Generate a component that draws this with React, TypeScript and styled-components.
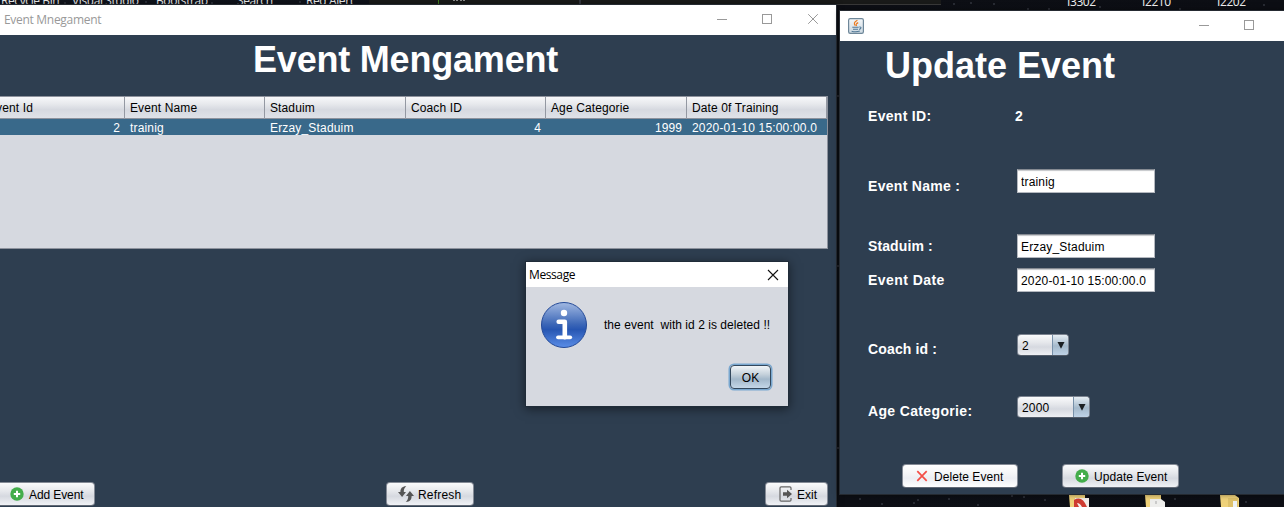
import React from "react";
import styled, { createGlobalStyle } from "styled-components";

const GlobalStyle = createGlobalStyle`
  * { box-sizing: border-box; }
  html, body { margin: 0; padding: 0; overflow: hidden; }
  body { font-family: "Liberation Sans", Arial, sans-serif; font-size: 12px; color: #000; }
`;

const Desktop = styled.main`
  position: relative;
  width: 1284px;
  height: 507px;
  overflow: hidden;
  background: linear-gradient(90deg, #10141d 0, #0d0f15 65%, #0c0e14 100%);
`;

const Stars = styled.svg`
  position: absolute;
  inset: 0;
`;

const BackWindow = styled.div`
  position: absolute;
  left: 369px;
  top: -10px;
  width: 572px;
  height: 15px;
  background: #191a19;
  border-bottom: 1px solid #383838;
`;

const ShortcutLabel = styled.span<{ $x: number; $y: number }>`
  position: absolute;
  left: ${(p) => p.$x}px;
  top: ${(p) => p.$y}px;
  font: 12px/16px "Open Sans", sans-serif;
  letter-spacing: -0.4px;
  color: #f0f0f0;
  white-space: pre;
`;

const FolderIcon = styled.svg<{ $x: number }>`
  position: absolute;
  left: ${(p) => p.$x}px;
  top: 495px;
`;

const Window = styled.section<{ $x: number; $y: number; $w: number; $h: number }>`
  position: absolute;
  left: ${(p) => p.$x}px;
  top: ${(p) => p.$y}px;
  width: ${(p) => p.$w}px;
  height: ${(p) => p.$h}px;
  display: flex;
  flex-direction: column;
  background: #2e3e50;
  box-shadow: 0 0 0 1px #252a31, 0 0 6px rgba(0, 0, 0, 0.6);
`;

const TitleBar = styled.header`
  display: flex;
  align-items: center;
  justify-content: space-between;
  flex: none;
  height: 30px;
  padding-left: 4px;
  background: #fff;
`;

const IconTitleBar = styled(TitleBar)`
  padding-left: 8px;
`;

const WindowTitle = styled.span<{ $color: string; $spacing: number }>`
  font: 12px/16px "Open Sans", sans-serif;
  letter-spacing: ${(p) => p.$spacing}px;
  color: ${(p) => p.$color};
`;

const WindowControls = styled.svg`
  flex: none;
`;

const Heading = styled.h1<{ $left: number; $spacing: number }>`
  flex: none;
  margin: 0;
  padding-left: ${(p) => p.$left}px;
  height: 61px;
  padding-top: 3px;
  font-size: 36px;
  line-height: 43px;
  font-weight: 700;
  letter-spacing: ${(p) => p.$spacing}px;
  color: #fff;
  white-space: nowrap;
`;

const TablePane = styled.div`
  flex: none;
  width: 828px;
  height: 153px;
  border: solid #8d929d;
  border-width: 1px 1px 1px 0;
  background: #d6d9e0;
  overflow: hidden;
`;

const TableRow = styled.div`
  display: grid;
  grid-template-columns: 125px 140px 141px 140px 141px 140px;
`;

const HeaderRow = styled(TableRow)`
  height: 22px;
  background: linear-gradient(#f7f8fa 0, #e6e8ec 35%, #d6d9e0 60%, #dfe2e8 100%);
  border-bottom: 1px solid #8d929d;
`;

const HeaderCell = styled.div<{ $shift?: number }>`
  padding-left: 5px;
  border-right: 1px solid #9398a2;
  line-height: 22px;
  letter-spacing: 0.12px;
  text-indent: ${(p) => p.$shift ?? 0}px;
  white-space: nowrap;
`;

const DataRow = styled(TableRow)`
  height: 16px;
  background: #39698a;
  color: #fff;
`;

const DataCell = styled.div<{ $numeric?: boolean }>`
  padding: 0 5px;
  line-height: 18px;
  letter-spacing: ${(p) => (p.$numeric ? 0.1 : 0.17)}px;
  white-space: nowrap;
  text-align: ${(p) => (p.$numeric ? "right" : "left")};
`;

const Tracked = styled.span<{ $by: number }>`
  letter-spacing: ${(p) => p.$by}px;
`;

const MainActions = styled.footer`
  display: flex;
  justify-content: space-between;
  align-items: flex-start;
  margin-top: 233px;
  margin-left: -5px;
  width: 833px;
`;

const PushButton = styled.button<{ $w: number; $pad?: number; $gap?: number; $hover?: boolean }>`
  display: flex;
  align-items: center;
  flex: none;
  gap: ${(p) => p.$gap ?? 4}px;
  width: ${(p) => p.$w}px;
  height: 24px;
  padding: 1px 0 0 ${(p) => p.$pad ?? 13}px;
  border: 1px solid #858b96;
  border-bottom-color: #626975;
  border-radius: 4px;
  background: ${(p) =>
    p.$hover
      ? "linear-gradient(#fff 0, #f4f5f7 40%, #eceef3 60%, #fff 100%)"
      : "linear-gradient(#fafbfc 0, #e5e7eb 38%, #d6d9e0 60%, #f0f2f6 100%)"};
  color: #000;
  font: 12px/16px "Liberation Sans", Arial, sans-serif;
  white-space: nowrap;
`;

const ButtonIcon = styled.svg`
  flex: none;
  margin-top: -1px;
`;

const UpdateForm = styled.form`
  display: flex;
  flex-direction: column;
  padding-left: 28px;
`;

const FormRow = styled.div<{ $h: number }>`
  display: grid;
  grid-template-columns: 149px auto;
  justify-content: start;
  align-items: start;
  height: ${(p) => p.$h}px;
`;

const FieldLabel = styled.label<{ $down?: number; $spacing?: number }>`
  padding-top: ${(p) => p.$down ?? 0}px;
  color: #fff;
  font-size: 14px;
  line-height: 18px;
  font-weight: 700;
  letter-spacing: ${(p) => p.$spacing ?? 0.3}px;
  white-space: nowrap;
`;

const IdValue = styled(FieldLabel)`
  margin-left: -2px;
`;

const TextField = styled.input`
  width: 138px;
  height: 24px;
  padding: 1px 3px 0;
  border: 1px solid #b4b8bf;
  border-top-color: #858a92;
  border-radius: 0;
  background: #fff;
  box-shadow: inset 0 2px 1px -1px #c5c7ca;
  font: 12px "Liberation Sans", Arial, sans-serif;
  letter-spacing: 0.17px;
  color: #000;
`;

const ComboBox = styled.div<{ $w: number }>`
  display: flex;
  width: ${(p) => p.$w}px;
  height: 22px;
  overflow: hidden;
  border: 1px solid #7b8390;
  border-bottom-color: #535c69;
  border-radius: 4px;
  background: linear-gradient(#fafbfc 0, #e5e7eb 38%, #d6d9e0 60%, #eef0f4 100%);
`;

const ComboValue = styled.span`
  flex: 1;
  padding-left: 4px;
  line-height: 22px;
  letter-spacing: 0.2px;
`;

const ComboArrow = styled.span`
  display: flex;
  width: 16px;
  align-items: center;
  justify-content: center;
  border-left: 1px solid #7790a9;
  background: linear-gradient(#e5edf3 0, #b6c7d6 40%, #a4b9cb 55%, #bfd3e7 100%);
`;

const FormActions = styled.div`
  display: flex;
  gap: 44px;
  padding-left: 34px;
`;

const Dialog = styled(Window)`
  background: #d6d9e0;
  box-shadow: 0 0 0 1px #202c39, 0 2px 10px 1px rgba(0, 0, 0, 0.5);
`;

const DialogTitleBar = styled(TitleBar)`
  height: 25px;
  padding-left: 3px;
`;

const DialogMessage = styled.div`
  display: flex;
  align-items: center;
  gap: 16px;
  height: 48px;
  margin: 14px 0 0 14px;
  white-space: pre;
`;

const OkButton = styled.button`
  align-self: flex-end;
  width: 41px;
  height: 24px;
  margin: 16px 17px 0 0;
  padding: 1px 0 0;
  border: 1px solid #33485d;
  border-radius: 4px;
  background: linear-gradient(#f1f5f8 0, #c5d1db 38%, #a3b8ca 60%, #c4d7e8 100%);
  box-shadow: 0 0 0 1.5px #79a7cf;
  color: #000;
  font: 12px "Liberation Sans", Arial, sans-serif;
`;

const PlusIcon = () => (
  <ButtonIcon width="14" height="14" viewBox="0 0 14 14">
    <circle cx="7" cy="7" r="6.7" fill="#43ad4b" />
    <path d="M7 3.8v6.4M3.8 7h6.4" stroke="#fff" strokeWidth="2" />
  </ButtonIcon>
);

const RefreshIcon = () => (
  <ButtonIcon width="16" height="16" viewBox="0 0 16 16" fill="#555">
    <path d="M8.3.2C4.3.1 2.3 2.4 2.4 6H0l4.1 5L8 6H5.8C5.7 3.5 6.4 1.6 8.3.2Z" />
    <path d="M7.7 15.8c4 .1 6-2.2 5.9-5.8H16l-4.1-5L8 10h2.2c.1 2.5-.6 4.4-2.5 5.8Z" />
  </ButtonIcon>
);

const ExitIcon = () => (
  <ButtonIcon width="14" height="16" viewBox="0 0 14 16">
    <path d="M12 4V2Q12 .8 10.8.8H2.2Q1 .8 1 2v12q0 1.2 1.2 1.2h8.6q1.2 0 1.2-1.2v-2" fill="none" stroke="#666" strokeWidth="1.2" />
    <path d="M4 6.3h4V3.8L13 8l-5 4.2V9.7H4Z" fill="#555" />
  </ButtonIcon>
);

const DeleteIcon = () => (
  <ButtonIcon width="12" height="12" viewBox="0 0 12 12">
    <path d="m1.3 1.2 9.4 9.6M10.7 1.2 1.3 10.8" stroke="#f44e46" strokeWidth="1.7" />
  </ButtonIcon>
);

const ArrowIcon = () => (
  <svg width="8" height="7" viewBox="0 0 8 7">
    <path d="M.5 0h7L4 6.8Z" fill="#1b2024" />
  </svg>
);

const JavaIcon = () => (
  <svg width="16" height="16" viewBox="0 0 16 16">
    <defs>
      <linearGradient id="javaTile" x2="0" y2="1">
        <stop stopColor="#f4f7f9" />
        <stop offset="1" stopColor="#ccd8e1" />
      </linearGradient>
    </defs>
    <rect x=".6" y=".6" width="14.8" height="14.8" rx="1.6" fill="url(#javaTile)" stroke="#6e8799" strokeWidth="1.2" />
    <path d="M9.4 2.2C5.8 4.4 5.8 5.4 7.3 7.6M10.2 4.6C7.8 5.8 7.8 6.4 8.6 8" fill="none" stroke="#ec7a20" strokeWidth="1.2" />
    <path d="M4.3 9.3h6.4M5 11.2h5M3.6 13.2c3 .8 6 .7 8.2-.2M11.3 9c2.5-.5 2 2-.2 2.4" fill="none" stroke="#517896" strokeWidth="1.1" />
  </svg>
);

const InfoIcon = () => (
  <svg width="48" height="48" viewBox="0 0 48 48">
    <defs>
      <linearGradient id="infoDisc" x2="0" y2="1">
        <stop stopColor="#a2b9e2" />
        <stop offset=".48" stopColor="#3c67b7" />
        <stop offset=".6" stopColor="#2756b2" />
        <stop offset="1" stopColor="#5a8de7" />
      </linearGradient>
    </defs>
    <circle cx="24" cy="24" r="22.5" fill="url(#infoDisc)" stroke="#244a98" strokeWidth="1" />
    <circle cx="24" cy="12" r="3.2" fill="#fff" />
    <path d="M18.7 20.8h6.1v15.5" fill="none" stroke="#fff" strokeWidth="4.6" strokeLinecap="round" strokeLinejoin="round" />
    <path d="M18 36.3h12.2" fill="none" stroke="#fff" strokeWidth="3.8" strokeLinecap="round" />
  </svg>
);

const starPoints = [
  [954, 4], [971, 3], [994, 4], [1028, 9], [1049, 9], [1100, 7], [1180, 9], [1264, 5], [65, 3], [146, 2], [212, 3], [300, 2],
  [838, 96], [838, 266], [838, 448], [860, 499], [882, 504], [914, 503], [918, 500], [949, 499], [978, 505], [1012, 496], [1024, 497], [1045, 500], [1175, 499], [1246, 502],
];

const headers = ["Event Id", "Event Name", "Staduim", "Coach ID", "Age Categorie", "Date 0f Training"];
const eventRow = ["2", "trainig", "Erzay_Staduim", "4", "1999", "2020-01-10 15:00:00.0"];
const numericColumns = [0, 3, 4];

export default function App() {
  return (
    <Desktop>
      <GlobalStyle />
      <Stars width="1284" height="507" fill="#59606b">
        {starPoints.map(([x, y]) => (
          <circle key={`${x}-${y}`} cx={x} cy={y} r=".7" />
        ))}
      </Stars>
      <ShortcutLabel $x={1} $y={-7}>Recycle Bin</ShortcutLabel>
      <ShortcutLabel $x={72} $y={-7}>Visual Studio</ShortcutLabel>
      <ShortcutLabel $x={156} $y={-7}>Bootstrap</ShortcutLabel>
      <ShortcutLabel $x={237} $y={-7}>Search</ShortcutLabel>
      <ShortcutLabel $x={306} $y={-7}>Red Alert</ShortcutLabel>
      <BackWindow />
      <Stars width="1284" height="5">
        <path d="M438.5 0v4" stroke="#43821f" />
        <path d="M580 0v4" stroke="#34363d" strokeWidth="2" />
        <path d="M453 .5h5M460 .5h6" stroke="#8a8a8a" strokeDasharray="2 1" />
      </Stars>
      <ShortcutLabel $x={1067} $y={-6}>I3302</ShortcutLabel>
      <ShortcutLabel $x={1142} $y={-6}>I2210</ShortcutLabel>
      <ShortcutLabel $x={1217} $y={-6}>I2202</ShortcutLabel>
      <FolderIcon $x={1068} width="22" height="12">
        <path d="M1 0h16v12H2Z" fill="#efd27a" />
        <path d="M7 3h14v9H7Z" fill="#f3eee9" />
        <path d="M6 5q8-5 13 7h-5q-2-4-5-4l2 4H6Z" fill="#cf3c31" />
      </FolderIcon>
      <FolderIcon $x={1144} width="22" height="12">
        <path d="M1 0h16v12H2Z" fill="#efd27a" />
        <path d="M6 4h11l4 3v5H6Z" fill="#eeeeec" />
        <path d="M12 6v3" stroke="#aaa" />
      </FolderIcon>
      <FolderIcon $x={1219} width="22" height="12">
        <path d="M1 0h15l4 3v9H2Z" fill="#efd27a" />
        <path d="M9 3h10v9H9Z" fill="#dec16a" />
        <path d="M14 6h4v6h-4Z" fill="#eef2f5" />
      </FolderIcon>

      <Window $x={0} $y={5} $w={836} $h={502}>
        <TitleBar>
          <WindowTitle $color="#999" $spacing={-0.3}>Event Mnegament</WindowTitle>
          <WindowControls width="124" height="30" fill="none" stroke="#999">
            <path d="M5 14.5h10M96.2 9.2l9.6 9.6M105.8 9.2l-9.6 9.6" />
            <rect x="50.5" y="9.5" width="9" height="9" />
          </WindowControls>
        </TitleBar>
        <Heading $left={253} $spacing={-0.2}>Event Mengament</Heading>
        <TablePane>
          <HeaderRow>
            {headers.map((title, i) => (
              <HeaderCell key={title} $shift={i === 0 ? -17 : 0}>{title}</HeaderCell>
            ))}
          </HeaderRow>
          <DataRow>
            {eventRow.map((value, i) => (
              <DataCell key={i} $numeric={numericColumns.includes(i)}>{value}</DataCell>
            ))}
          </DataRow>
        </TablePane>
        <MainActions>
          <PushButton $w={100} $pad={14} $gap={5}><PlusIcon /><Tracked $by={-0.1}>Add Event</Tracked></PushButton>
          <PushButton $w={88} $pad={11}><RefreshIcon /><Tracked $by={0.2}>Refresh</Tracked></PushButton>
          <PushButton $w={63}><ExitIcon /><Tracked $by={0}>Exit</Tracked></PushButton>
        </MainActions>
      </Window>

      <Window $x={840} $y={11} $w={460} $h={483}>
        <IconTitleBar>
          <JavaIcon />
          <WindowControls width="106" height="30" fill="none" stroke="#999">
            <path d="M5 14.5h10" />
            <rect x="50.5" y="9.5" width="9" height="9" />
          </WindowControls>
        </IconTitleBar>
        <Heading $left={45} $spacing={0}>Update Event</Heading>
        <UpdateForm>
          <FormRow $h={67}>
            <FieldLabel $down={5}>Event ID:</FieldLabel>
            <IdValue $down={5}>2</IdValue>
          </FormRow>
          <FormRow $h={65}>
            <FieldLabel $down={8}>Event Name :</FieldLabel>
            <TextField defaultValue="trainig" />
          </FormRow>
          <FormRow $h={34}>
            <FieldLabel $down={3} $spacing={0.1}>Staduim :</FieldLabel>
            <TextField defaultValue="Erzay_Staduim" />
          </FormRow>
          <FormRow $h={66}>
            <FieldLabel $down={3} $spacing={0.45}>Event Date</FieldLabel>
            <TextField defaultValue="2020-01-10 15:00:00.0" />
          </FormRow>
          <FormRow $h={62}>
            <FieldLabel $down={6} $spacing={0.15}>Coach id :</FieldLabel>
            <ComboBox $w={52}><ComboValue>2</ComboValue><ComboArrow><ArrowIcon /></ComboArrow></ComboBox>
          </FormRow>
          <FormRow $h={68}>
            <FieldLabel $down={6} $spacing={0.35}>Age Categorie:</FieldLabel>
            <ComboBox $w={73}><ComboValue>2000</ComboValue><ComboArrow><ArrowIcon /></ComboArrow></ComboBox>
          </FormRow>
          <FormActions>
            <PushButton type="button" $w={116} $gap={6} $hover><DeleteIcon /><Tracked $by={0.05}>Delete Event</Tracked></PushButton>
            <PushButton type="button" $w={117} $pad={12} $gap={5}><PlusIcon /><Tracked $by={0.05}>Update Event</Tracked></PushButton>
          </FormActions>
        </UpdateForm>
      </Window>

      <Dialog $x={526} $y={262} $w={262} $h={144}>
        <DialogTitleBar>
          <WindowTitle $color="#000" $spacing={-0.4}>Message</WindowTitle>
          <WindowControls width="21" height="24" fill="none" stroke="#111" strokeWidth="1.1">
            <path d="m1 7 10 10M11 7 1 17" />
          </WindowControls>
        </DialogTitleBar>
        <DialogMessage>
          <InfoIcon />
          <Tracked $by={0.04}>{"the event  with id 2 is deleted !!"}</Tracked>
        </DialogMessage>
        <OkButton>OK</OkButton>
      </Dialog>
    </Desktop>
  );
}
